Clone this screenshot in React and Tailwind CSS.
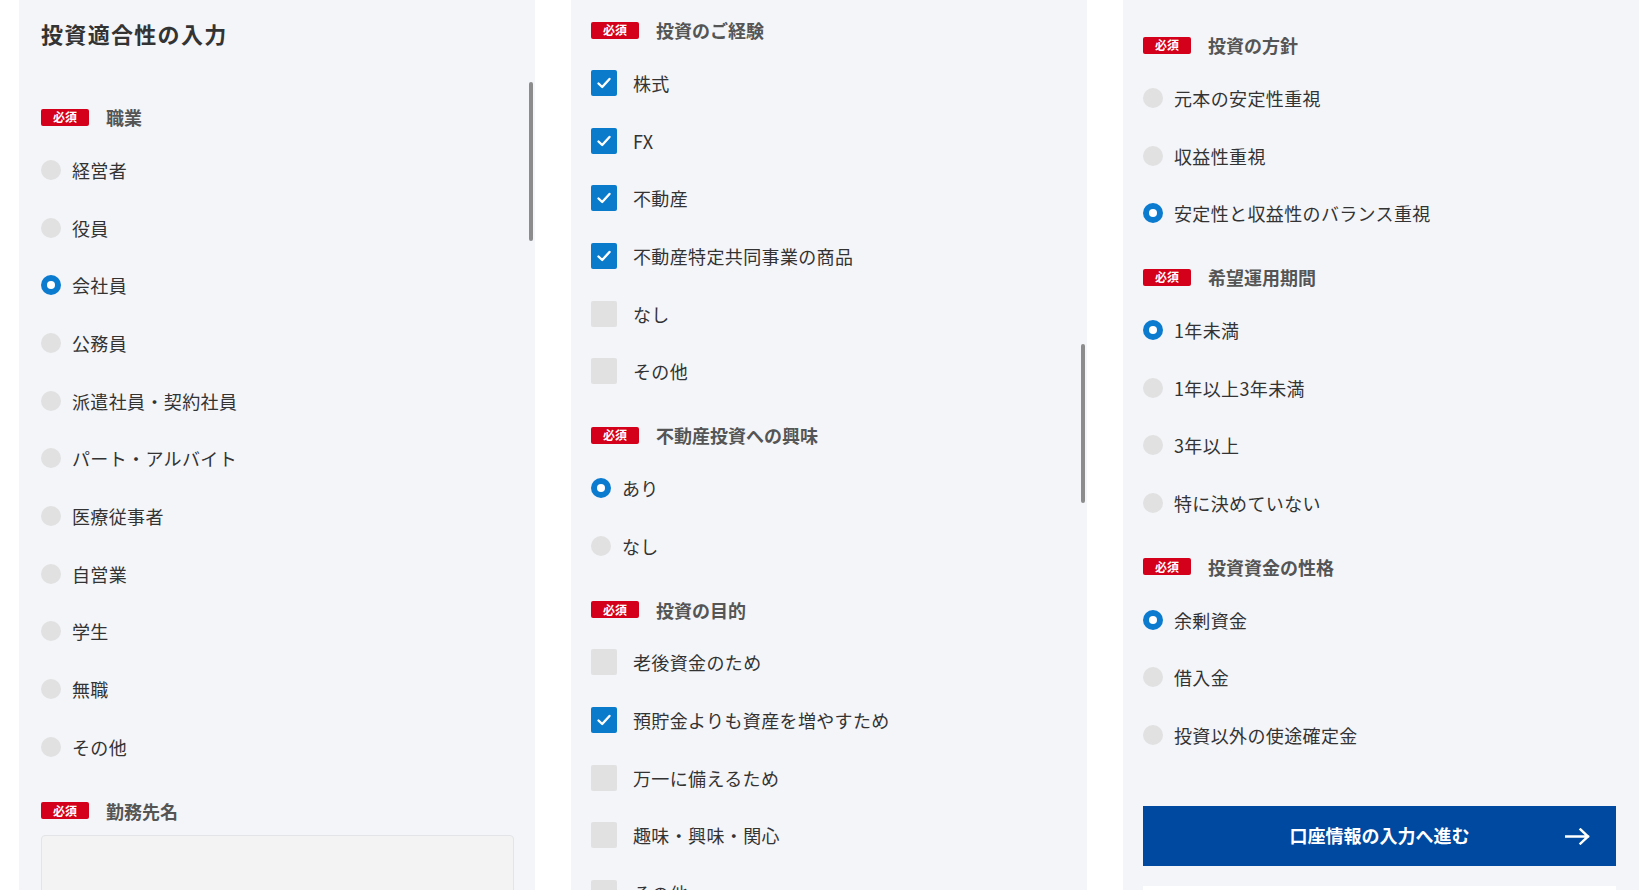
import { Fragment } from 'react';

const font = { fontFamily: '"Noto Sans CJK JP", "Noto Sans", sans-serif' };

function Badge() {
    return (
        <span className="flex items-center justify-center w-[48px] h-[17px] rounded-[2px] bg-[#d4001b] text-white text-[12px] font-bold leading-none">
            必須
        </span>
    );
}

function Heading({ children }) {
    return (
        <div className="h-[48px] flex items-center gap-[17px]">
            <Badge />
            <span className="text-[18px] font-bold text-[#555] leading-none">{children}</span>
        </div>
    );
}

function Radio({ label, checked }) {
    return (
        <div className="h-[57.7px] flex items-center gap-[11px]">
            {checked ? (
                <span className="w-[20px] h-[20px] rounded-full bg-[#0b7bd0] flex items-center justify-center">
                    <span className="w-[8px] h-[8px] rounded-full bg-white"></span>
                </span>
            ) : (
                <span className="w-[20px] h-[20px] rounded-full bg-[#e1e1e1]"></span>
            )}
            <span className="text-[18px] text-[#333] leading-none tracking-[0.02em]">{label}</span>
        </div>
    );
}

function Check({ label, checked }) {
    return (
        <div className="h-[57.7px] flex items-center gap-[16px]">
            {checked ? (
                <span className="w-[26px] h-[26px] rounded-[2px] bg-[#0a7acb] flex items-center justify-center">
                    <svg width="16" height="16" viewBox="0 0 16 16" fill="none">
                        <path d="M2.5 8.5 L6.2 12 L13.5 4" stroke="white" strokeWidth="2.4" strokeLinecap="round" strokeLinejoin="round" />
                    </svg>
                </span>
            ) : (
                <span className="w-[26px] h-[26px] rounded-[2px] bg-[#e1e1e1]"></span>
            )}
            <span className="text-[18px] text-[#333] leading-none tracking-[0.02em]">{label}</span>
        </div>
    );
}

function Section({ title, items, type = 'radio', first }) {
    const Item = type === 'radio' ? Radio : Check;
    return (
        <div className={first ? '' : 'mt-[11px]'}>
            <Heading>{title}</Heading>
            {items.map(([label, checked]) => (
                <Item key={label} label={label} checked={checked} />
            ))}
        </div>
    );
}

function Scrollbar({ top, height }) {
    return <div className="absolute right-[2px] w-[4px] rounded-full bg-[#8c8c8c]" style={{ top, height }}></div>;
}

export default function App() {
    return (
        <div className="w-[1642px] h-[890px] bg-white overflow-hidden flex gap-[36px] pl-[19px]" style={font}>
            {/* 左 */}
            <div className="relative w-[516px] h-[890px] shrink-0 overflow-hidden bg-[#f3f5f9] pl-[22px]">
                <Scrollbar top={82} height={159} />
                <h1 className="h-[66px] flex items-center text-[22px] font-bold text-[#333] tracking-[0.06em]">投資適合性の入力</h1>
                <div className="mt-[27px]">
                    <Section
                        first
                        title="職業"
                        items={[
                            ['経営者'],
                            ['役員'],
                            ['会社員', true],
                            ['公務員'],
                            ['派遣社員・契約社員'],
                            ['パート・アルバイト'],
                            ['医療従事者'],
                            ['自営業'],
                            ['学生'],
                            ['無職'],
                            ['その他'],
                        ]}
                    />
                    <div className="mt-[11px]">
                        <Heading>勤務先名</Heading>
                        <div className="w-[473px] h-[80px] rounded-[4px] border border-[#e2e4e8] bg-[#f3f3f3]"></div>
                    </div>
                </div>
            </div>

            {/* 中 */}
            <div className="relative w-[516px] h-[890px] shrink-0 overflow-hidden bg-[#f3f5f9] pl-[20px] pt-[6px]">
                <Scrollbar top={344} height={159} />
                <Section
                    first
                    type="check"
                    title="投資のご経験"
                    items={[['株式', true], ['FX', true], ['不動産', true], ['不動産特定共同事業の商品', true], ['なし'], ['その他']]}
                />
                <Section title="不動産投資への興味" items={[['あり', true], ['なし']]} />
                <Section
                    type="check"
                    title="投資の目的"
                    items={[['老後資金のため'], ['預貯金よりも資産を増やすため', true], ['万一に備えるため'], ['趣味・興味・関心'], ['その他']]}
                />
            </div>

            {/* 右 */}
            <div className="relative w-[516px] h-[890px] shrink-0 overflow-hidden bg-[#f3f5f9] pl-[20px] pr-[19px] pt-[21px]">
                <Section
                    first
                    title="投資の方針"
                    items={[['元本の安定性重視'], ['収益性重視'], ['安定性と収益性のバランス重視', true]]}
                />
                <Section title="希望運用期間" items={[['1年未満', true], ['1年以上3年未満'], ['3年以上'], ['特に決めていない']]} />
                <Section title="投資資金の性格" items={[['余剰資金', true], ['借入金'], ['投資以外の使途確定金']]} />
                <button className="relative mt-[42px] w-[473px] h-[60px] bg-[#0049a0] text-white text-[18px] font-bold flex items-center justify-center">
                    口座情報の入力へ進む
                    <svg className="absolute right-[26px] top-[22px]" width="25" height="17" viewBox="0 0 25 17" fill="none">
                        <path d="M1 8.5 H23 M15.5 1.5 L23 8.5 L15.5 15.5" stroke="white" strokeWidth="2.4" strokeLinecap="square" />
                    </svg>
                </button>
                <div className="mt-[20px] h-[40px] w-[473px] bg-white"></div>
            </div>
        </div>
    );
}
